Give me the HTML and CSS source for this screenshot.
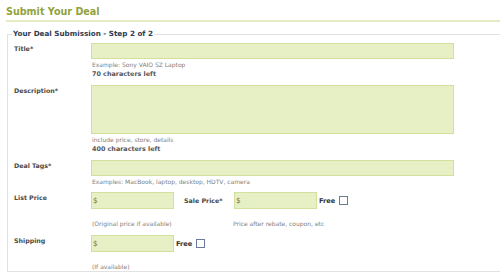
FILE: index.html
```html
<!DOCTYPE html>
<html lang="en">
<head>
  <meta charset="UTF-8" />
  <title>Submit Your Deal</title>
  <link rel="stylesheet" href="styles.css">
</head>
<body>
  <div class="page">
    <h1 class="page-title">Submit Your Deal</h1>

    <fieldset class="deal-form">
      <legend>Your Deal Submission - Step 2 of 2</legend>

      <!-- Title -->
      <div class="row row-title">
        <label class="label">Title*</label>
        <div class="field">
          <input type="text" class="box wide" />
          <div class="hint">Example: Sony VAIO SZ Laptop</div>
          <div class="counter">70 characters left</div>
        </div>
      </div>

      <!-- Description -->
      <div class="row row-desc">
        <label class="label">Description*</label>
        <div class="field">
          <textarea class="box wide area"></textarea>
          <div class="hint">include price, store, details</div>
          <div class="counter">400 characters left</div>
        </div>
      </div>

      <!-- Tags -->
      <div class="row row-tags">
        <label class="label">Deal Tags*</label>
        <div class="field">
          <input type="text" class="box wide" />
          <div class="hint">Examples: MacBook, laptop, desktop, HDTV, camera</div>
        </div>
      </div>

      <!-- Prices -->
      <div class="row row-price">
        <label class="label">List Price</label>
        <div class="field">
          <div class="inline">
            <input type="text" class="box short" value="$" />
            <label class="label sale-label">Sale Price*</label>
            <input type="text" class="box short" value="$" />
            <span class="free">Free</span>
            <span class="check"></span>
          </div>
          <div class="inline hints">
            <div class="hint hint-list">(Original price if available)</div>
            <div class="hint">Price after rebate, coupon, etc</div>
          </div>
        </div>
      </div>

      <!-- Shipping -->
      <div class="row row-ship">
        <label class="label">Shipping</label>
        <div class="field">
          <div class="inline">
            <input type="text" class="box short" value="$" />
            <span class="free">Free</span>
            <span class="check"></span>
          </div>
          <div class="hint hint-ship">(If available)</div>
        </div>
      </div>
    </fieldset>
  </div>
</body>
</html>
```

FILE: styles.css
```css
body {
  margin: 0;
  background: #fff;
  font-family: "DejaVu Sans", Verdana, sans-serif;
  color: #444;
  overflow: hidden;
}

.page {
  padding: 5px 0 0 6px;
}

.page-title {
  margin: 0;
  font-size: 9.6px;
  line-height: 13px;
  color: #92a240;
  padding-bottom: 2px;
  border-bottom: 2px solid #e4ecc4;
}

.deal-form {
  margin: 7px 0 0 1px;
  padding: 0 0 0 6px;
  border: 1px solid #e2e2e2;
  border-right: none;
  min-width: 0;
}

.deal-form legend {
  padding: 0 1px;
  margin-left: -2px;
  font-size: 7.2px;
  font-weight: bold;
  color: #2e3b52;
  line-height: 10px;
}

.row {
  display: flex;
}

.label {
  width: 77px;
  flex: none;
  font-size: 6.3px;
  font-weight: bold;
  color: #4a4a4a;
  line-height: 10px;
  padding-top: 1px;
  white-space: nowrap;
}

.field {
  display: flex;
  flex-direction: column;
}

.box {
  box-sizing: border-box;
  margin: 0;
  background: #e7efc5;
  border: 1px solid #d3df9f;
  font-family: inherit;
  font-size: 7.5px;
  color: #7a7540;
  padding: 0 1px;
  outline: none;
}

.wide {
  width: 363px;
  height: 16px;
}

.area {
  height: 49px;
  resize: none;
  display: block;
}

.short {
  width: 83px;
  height: 17px;
}

.hint {
  font-size: 6px;
  line-height: 8px;
  color: #808080;
  margin-top: 2px;
  padding-left: 1px;
  white-space: nowrap;
}

.counter {
  font-size: 6.4px;
  font-weight: bold;
  line-height: 10px;
  color: #555;
  padding-left: 1px;
}

.row-title { margin-top: 4px; }
.row-desc { margin-top: 6px; }
.row-tags { margin-top: 6px; }
.row-price { margin-top: 6px; }
.row-ship { margin-top: 7px; }

.inline {
  display: flex;
  align-items: center;
}

.sale-label {
  padding: 0;
  margin: 0 0 0 10px;
  width: 50px;
}

.free {
  font-size: 6.6px;
  font-weight: bold;
  color: #333;
  margin-left: 2px;
}

.check {
  width: 7px;
  height: 7px;
  border: 1px solid #6a7a9a;
  margin-left: 4px;
  background: #fff;
}

.hints {
  align-items: flex-start;
  margin-top: 9px;
}

.hint-list {
  width: 140px;
}

.hint-ship {
  margin-top: 11px;
}
```
